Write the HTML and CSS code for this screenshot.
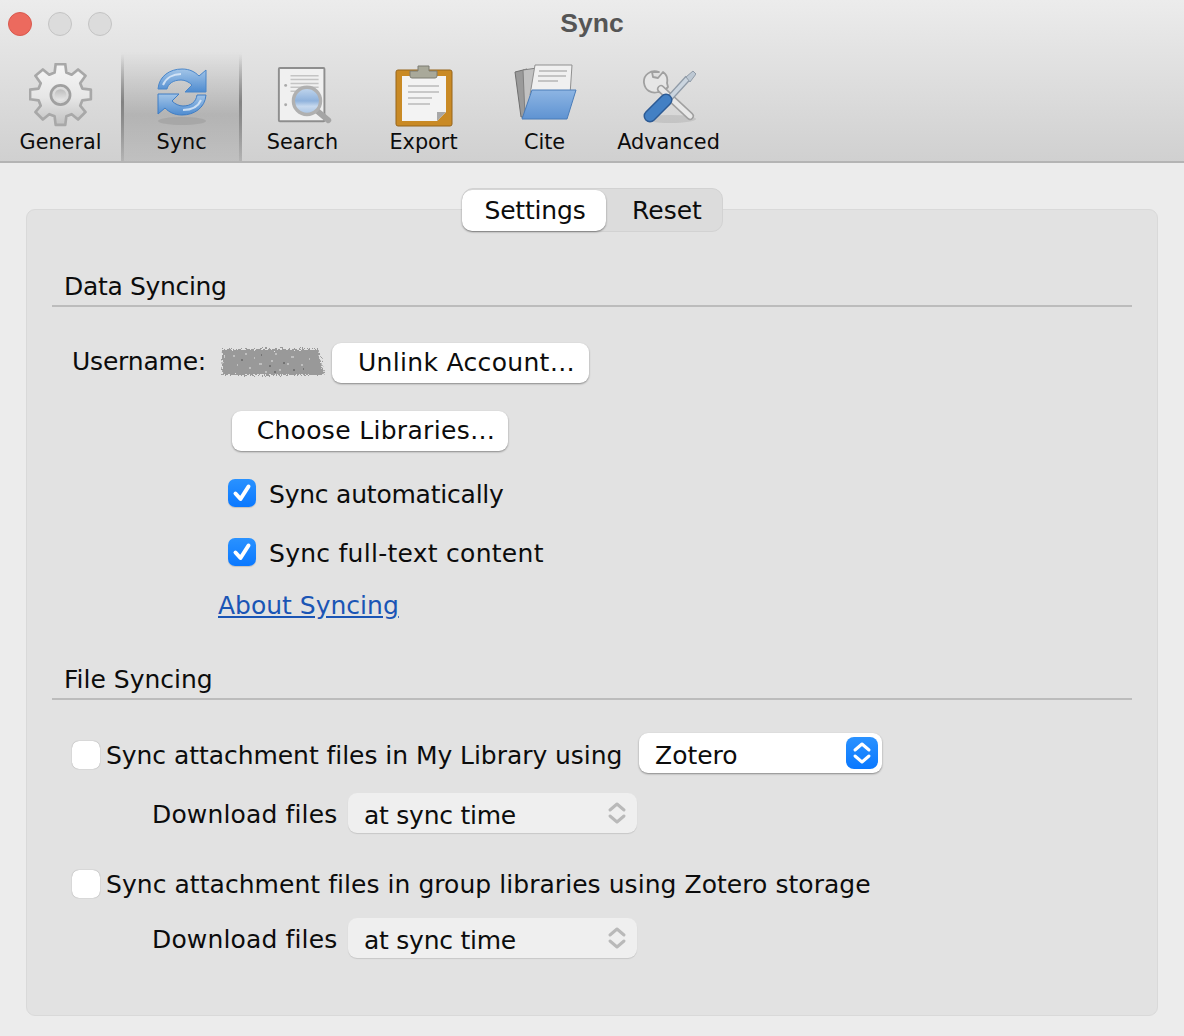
FILE: index.html
```html
<!DOCTYPE html>
<html lang="en">
<head>
<meta charset="utf-8">
<title>Sync</title>
<link rel="stylesheet" href="styles.css">
</head>
<body>
<div class="window">
  <header class="chrome">
    <div class="titlebar">
      <div class="lights"><span class="light close"></span><span class="light"></span><span class="light"></span></div>
      <h1 class="title">Sync</h1>
    </div>
    <nav class="toolbar">
      <div class="tool">
        <svg class="icon" viewBox="2 2 60 60"><defs><linearGradient id="gear" x1="0" y1="0" x2="0" y2="1"><stop offset="0" stop-color="#f6f6f6"/><stop offset=".55" stop-color="#e6e6e6"/><stop offset="1" stop-color="#c2c2c2"/></linearGradient><linearGradient id="hub" x1="0" y1="0" x2="0" y2="1"><stop offset="0" stop-color="#bcbcbc"/><stop offset="1" stop-color="#e8e8e8"/></linearGradient></defs><path d="M27 3h9l1 8 5 2 6-5 7 6-5 7 2 5 8 1v9l-8 1-2 5 5 6-7 7-6-5-5 2-1 8h-9l-1-8-5-2-6 5-7-7 5-6-2-5-8-1v-9l8-1 2-5-5-7 7-6 6 5 5-2z" fill="url(#gear)" stroke="#a8a8a8" stroke-width="2.500" stroke-linejoin="round"/><circle cx="31.500" cy="32" r="9" fill="#dcdcdc" stroke="#a0a0a0" stroke-width="2.500"/><circle cx="31.500" cy="32" r="5.500" fill="url(#hub)"/></svg>
        <span class="tool-label">General</span>
      </div>
      <div class="tool active">
        <svg class="icon" viewBox="0 0 64 64"><defs><linearGradient id="blue" x1="0" y1="0" x2="0" y2="1"><stop offset="0" stop-color="#a3c5e8"/><stop offset="1" stop-color="#4f8cd0"/></linearGradient></defs><ellipse cx="32" cy="58" rx="24" ry="4" fill="#8c8c8c" opacity=".35"/><path d="M8 26C9 13 20 6 32 6c8 0 13 3 17 7l7-6v22H35l7-7c-3-3-7-5-11-5-8 0-13 4-14 9z" fill="url(#blue)" stroke="#4a86c9"/><path d="M56 32c-1 13-12 20-24 20-8 0-13-3-17-7l-7 6V31h21l-7 7c3 3 7 5 11 5 8 0 13-4 14-11z" fill="url(#blue)" stroke="#3f7dc4"/><path d="M13 22c3-7 10-11 18-11M51 37c-3 7-10 10-18 10" fill="none" stroke="#e2eefa" stroke-width="2" opacity=".8"/></svg>
        <span class="tool-label">Sync</span>
      </div>
      <div class="tool">
        <svg class="icon icon-search" viewBox="0 0 64 64"><defs><linearGradient id="lens" x1="0" y1="0" x2="0" y2="1"><stop offset="0" stop-color="#c4d8ee"/><stop offset=".5" stop-color="#8fb2dc"/><stop offset=".7" stop-color="#c7d9ee"/><stop offset="1" stop-color="#a6c2e3"/></linearGradient></defs><rect x="4" y="2" width="47" height="55" rx="1" fill="#f0f0f0" stroke="#8e8e8e" stroke-width="2"/><path d="M16 10h29M16 14h29M16 18h29M16 22h29M16 26h12" stroke="#c4c4c4" stroke-width="1.500"/><circle cx="11" cy="20" r="1.500" fill="#aaa"/><circle cx="11" cy="40" r="1.500" fill="#aaa"/><path d="M43 46l12 10" stroke="#a5a5a5" stroke-width="6" stroke-linecap="round"/><circle cx="33" cy="36" r="14" fill="url(#lens)" stroke="#b0b0b0" stroke-width="3.500"/></svg>
        <span class="tool-label">Search</span>
      </div>
      <div class="tool">
        <svg class="icon" viewBox="0 0 64 64"><rect x="4" y="7" width="56" height="56" rx="2" fill="#c98a25" stroke="#96641b"/><path d="M10 13h44v36l-9 9H10z" fill="#f3f3f3"/><path d="M45 58v-9h9z" fill="#a8a8a8"/><path d="M16 23h31M16 29h31M16 35h24M16 41h22" stroke="#c8c8c8" stroke-width="2"/><path d="M18 13v-5h8V3h11v5h8v5a2 2 0 0 1-2 2H20a2 2 0 0 1-2-2z" fill="#a9a99a" stroke="#7d7d72"/></svg>
        <span class="tool-label">Export</span>
      </div>
      <div class="tool">
        <svg class="icon" viewBox="0 0 64 64"><defs><linearGradient id="folder" x1="0" y1="0" x2="0" y2="1"><stop offset="0" stop-color="#8db5e3"/><stop offset="1" stop-color="#5f93d2"/></linearGradient></defs><path d="M2 9l12-3 3 48H8z" fill="#9a9a9a" stroke="#6e6e6e"/><path d="M10 7l14-2-2 48H12z" fill="#c2c2c2" stroke="#808080"/><path d="M22 2h37l-2 30H17z" fill="#f0f0f0" stroke="#8f8f8f"/><path d="M26 8h28M25 13h28M25 18h20" stroke="#b5b5b5" stroke-width="1.500"/><path d="M19 27h44l-9 29H9z" fill="url(#folder)" stroke="#4a7cb8"/></svg>
        <span class="tool-label">Cite</span>
      </div>
      <div class="tool tool-wide">
        <svg class="icon icon-tools" viewBox="0 0 54 54"><ellipse cx="28" cy="49" rx="26" ry="4" fill="#999" opacity=".3"/><path d="M17 2C9-1 1 5 2 13c1 7 7 11 14 9l4 1 6-6-1-4c1-5-1-9-4-11l-5 6-5-1-1-5z" fill="#e6e6e6" stroke="#a0a0a0" stroke-width="1.800" stroke-linejoin="round"/><path d="M19 19l29 27" stroke="#a0a0a0" stroke-width="8" stroke-linecap="round"/><path d="M19 19l29 27" stroke="#e8e8e8" stroke-width="5" stroke-linecap="round"/><path d="M25 31l21-23" stroke="#8f9aa6" stroke-width="6.500"/><path d="M25 31l21-23" stroke="#cbd5df" stroke-width="4"/><path d="M44 7l7-6 3 3-6 8z" fill="#bdc8d3" stroke="#8f9aa6"/><path d="M24 30L8 46" stroke="#2c5a94" stroke-width="13" stroke-linecap="round"/><path d="M24 30L8 46" stroke="#4380c4" stroke-width="10" stroke-linecap="round"/></svg>
        <span class="tool-label">Advanced</span>
      </div>
    </nav>
  </header>

  <main class="pane">
    <div class="segmented">
      <span class="seg seg-on">Settings</span>
      <span class="seg seg-off">Reset</span>
    </div>
    <section class="panel">
      <h2 class="group-title title-data">Data Syncing</h2>
      <div class="row row-user">
        <span class="label-user">Username:</span>
        <svg class="redacted" viewBox="0 0 108 36"><defs><filter id="rough" x="-5%" y="-15%" width="110%" height="130%"><feTurbulence type="fractalNoise" baseFrequency=".6" numOctaves="2" seed="4"/><feDisplacementMap in="SourceGraphic" scale="8" xChannelSelector="R" yChannelSelector="G"/></filter></defs><path d="M4 5h95l6 26H3z" fill="#999" filter="url(#rough)"/><path d="M14 12h2M26 10h2M40 20h3M52 17h2M60 26h2M72 13h3M30 24h2M82 21h2M46 28h2M18 21h1M35 14h1M68 20h2M90 15h1M56 10h2" stroke="#e4e4e4" stroke-width="1"/><path d="M22 16h2M50 22h2M64 19h2M55 28h2M74 26h2M42 11h1M84 25h1" stroke="#4e4e4e" stroke-width="1"/></svg>
        <button class="btn btn-unlink">Unlink Account…</button>
      </div>
      <div class="row row-libs"><button class="btn btn-libs">Choose Libraries…</button></div>
      <label class="check-row check-first"><span class="check on"><svg viewBox="0 0 28 28"><path d="M7.500 14.500l5 5.500 8-12.500" fill="none" stroke="#fff" stroke-width="4" stroke-linecap="round" stroke-linejoin="round"/></svg></span><span class="auto-text">Sync automatically</span></label>
      <label class="check-row check-second"><span class="check on"><svg viewBox="0 0 28 28"><path d="M7.500 14.500l5 5.500 8-12.500" fill="none" stroke="#fff" stroke-width="4" stroke-linecap="round" stroke-linejoin="round"/></svg></span><span class="full-text">Sync full-text content</span></label>
      <a class="about" href="#">About Syncing</a>

      <h2 class="group-title group-files">File Syncing</h2>
      <div class="file-row file-first">
        <span class="check off"></span><span class="file-text">Sync attachment files in My Library using</span>
        <div class="select select-on"><span class="select-text">Zotero</span><span class="stepper stepper-on"><svg viewBox="0 0 32 32"><path d="M9 13l7-6 7 6M9 19l7 6 7-6" fill="none" stroke="#fff" stroke-width="3" stroke-linecap="round" stroke-linejoin="round"/></svg></span></div>
      </div>
      <div class="download-row">
        <span class="download-label">Download files</span>
        <div class="select select-off"><span class="select-text time-text">at sync time</span><span class="stepper"><svg viewBox="0 0 32 32"><path d="M9 13l7-6 7 6M9 19l7 6 7-6" fill="none" stroke="#b9b9b9" stroke-width="3" stroke-linecap="round" stroke-linejoin="round"/></svg></span></div>
      </div>
      <div class="file-row file-second">
        <span class="check off"></span><span class="file-text group-text">Sync attachment files in group libraries using Zotero storage</span>
      </div>
      <div class="download-row">
        <span class="download-label">Download files</span>
        <div class="select select-off"><span class="select-text time-text">at sync time</span><span class="stepper"><svg viewBox="0 0 32 32"><path d="M9 13l7-6 7 6M9 19l7 6 7-6" fill="none" stroke="#b9b9b9" stroke-width="3" stroke-linecap="round" stroke-linejoin="round"/></svg></span></div>
      </div>
    </section>
  </main>
</div>
</body>
</html>
```
FILE: styles.css
```css
* { box-sizing: border-box; }
html, body { margin: 0; padding: 0; }
body {
  width: 1184px;
  height: 1036px;
  overflow: hidden;
  background: #ececec;
  color: #0c0c0c;
  font-family: "DejaVu Sans", sans-serif;
  font-size: 25px;
}
.window { display: flex; flex-direction: column; height: 1036px; }

.chrome {
  height: 163px;
  background: linear-gradient(#ececec 0, #e4e4e4 45px, #d0d0d0 162px);
  border-bottom: 2px solid #b4b4b4;
}
.titlebar { height: 46px; display: flex; align-items: center; justify-content: center; position: relative; }
.lights { position: absolute; left: 8px; top: 12px; display: flex; gap: 16px; }
.light { width: 24px; height: 24px; border-radius: 50%; background: #dcdcdc; border: 1px solid #c4c4c4; }
.close { background: #ec6a5e; border-color: #d9594e; }
.title { margin: 0; font-size: 26.500px; font-weight: 700; color: #555; font-family: "Liberation Sans", sans-serif; }

.toolbar { display: flex; height: 115px; }
.tool { width: 121px; display: flex; flex-direction: column; align-items: center; padding-top: 17px; position: relative; }
.tool-wide { width: 127px; }
.tool.active {
  background: linear-gradient(rgba(0,0,0,0) 5px, rgba(0,0,0,.17) 60%, rgba(0,0,0,.08) 100%);
}
.tool.active::before,
.tool.active::after {
  content: "";
  position: absolute;
  top: 8px;
  bottom: 0;
  width: 3px;
  background: linear-gradient(rgba(110,110,110,0), rgba(110,110,110,.75) 45%, rgba(110,110,110,.15));
}
.tool.active::before { left: 0; }
.tool.active::after { right: 0; }
.icon { width: 64px; height: 64px; display: block; filter: blur(.6px); flex: none; }
.icon-search { width: 62px; height: 62px; margin: 3px 0 -1px 6px; }
.icon-tools { width: 54px; height: 54px; margin: 7px 0 3px; }
.tool-label { font-size: 20.800px; line-height: 26px; margin-top: 2px; white-space: nowrap; }

.pane { flex: 1; display: flex; flex-direction: column; padding: 25px 26px 20px; }
.segmented {
  align-self: center;
  width: 261px;
  height: 44px;
  margin-bottom: -23px;
  display: flex;
  align-items: center;
  background: #dcdcdc;
  border: 1px solid #d2d2d2;
  border-radius: 11px;
  position: relative;
  z-index: 1;
}
.seg { flex: 1; text-align: center; font-size: 25px; }
.seg-off { padding: 1px 0 0 7px; }
.seg-on {
  flex: none;
  width: 144px;
  height: 41px;
  line-height: 42px;
  margin-left: -1px;
  padding-left: 3px;
  letter-spacing: -.2px;
  background: #fff;
  border-radius: 10px;
  box-shadow: 0 1px 2px rgba(0,0,0,.45);
}
.panel {
  flex: 1;
  background: #e2e2e2;
  border: 1px solid #d9d9d9;
  border-radius: 9px;
  padding: 58px 25px 0;
}
.group-title {
  margin: 0;
  height: 39px;
  line-height: 36px;
  padding: 1px 0 0 12px;
  font-size: 25px;
  font-weight: 400;
  border-bottom: 2px solid #bcbcbc;
}
.title-data { letter-spacing: -.33px; }
.row { display: flex; align-items: center; }
.row-user { margin-top: 35px; height: 42px; padding-left: 20px; }
.label-user { width: 148px; flex: none; margin-bottom: 4px; letter-spacing: -.2px; }
.redacted { width: 108px; height: 36px; flex: none; margin-left: -1px; margin-top: -2px; }
.btn {
  font: inherit;
  letter-spacing: .32px;
  color: inherit;
  background: #fff;
  border: 0;
  border-radius: 9px;
  height: 40px;
  padding: 0 0 2px 12px;
  box-shadow: 0 1px 2px rgba(0,0,0,.4);
  white-space: nowrap;
}
.btn-unlink { width: 257px; margin-left: 5px; }
.row-libs { margin-top: 26px; padding-left: 180px; height: 42px; }
.btn-libs { width: 276px; }

.check-row { display: flex; align-items: center; gap: 13px; padding-left: 176px; height: 30px; }
.check-first { margin-top: 27px; }
.check-second { margin-top: 29px; }
.check-row .check { margin-bottom: 2px; }
.auto-text { letter-spacing: -.22px; }
.full-text { letter-spacing: .27px; }
.check { width: 28px; height: 28px; border-radius: 7px; flex: none; display: block; }
.check svg { display: block; width: 28px; height: 28px; }
.on { background: linear-gradient(#2a92ff, #0a78ff); box-shadow: 0 1px 1px rgba(0,0,0,.15); }
.off { background: #fff; box-shadow: 0 0 1px rgba(0,0,0,.45); }
.about { display: block; margin: 24px 0 0 166px; color: #1a55b5; height: 30px; line-height: 28px; }

.group-files { margin-top: 39px; }
.file-row { display: flex; align-items: center; padding-left: 20px; }
.file-first { margin-top: 34px; height: 42px; }
.file-second { margin-top: 27px; height: 42px; }
.file-row .check { margin-right: 6px; }
.file-text { white-space: nowrap; letter-spacing: -.05px; }
.group-text { letter-spacing: .05px; }
.file-first .file-text { width: 533px; flex: none; }
.download-row { display: flex; align-items: center; height: 42px; margin-top: 18px; padding-left: 100px; }
.file-second + .download-row { margin-top: 14px; }
.download-label { width: 196px; flex: none; margin-bottom: 2px; letter-spacing: .15px; }
.select {
  display: flex;
  align-items: center;
  justify-content: space-between;
  height: 40px;
  margin-bottom: 4px;
  border-radius: 9px;
  padding-left: 16px;
}
.select-text { margin-top: 4px; }
.time-text { letter-spacing: -.25px; }
.select-on { width: 243px; background: #fff; box-shadow: 0 1px 2px rgba(0,0,0,.4); padding-right: 4px; }
.select-off { width: 289px; background: #efefef; box-shadow: 0 1px 1px rgba(0,0,0,.12); padding-right: 4px; }
.stepper { width: 32px; height: 32px; border-radius: 8px; display: block; }
.stepper svg { display: block; width: 32px; height: 32px; }
.stepper-on { background: linear-gradient(#2a92ff, #0a78ff); }
```
